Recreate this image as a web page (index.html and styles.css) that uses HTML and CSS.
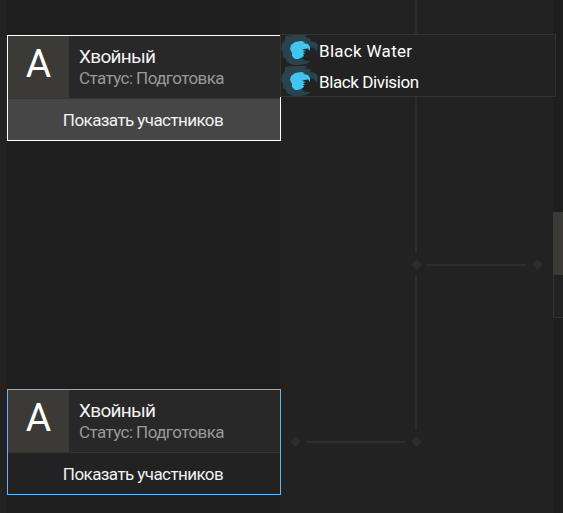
FILE: index.html
```
<!DOCTYPE html>
<html lang="ru">
<head>
    <meta charset="UTF-8">
    <meta name="viewport" content="width=device-width, initial-scale=1.0">
    <title>Турнирная сетка</title>
    <link rel="stylesheet" href="styles.css">
</head>
<body>
    <!-- Eagle logo shared by the teams -->
    <svg class="symbols" aria-hidden="true">
        <symbol id="eagle" viewBox="0 0 38 30">
            <path class="eagle-wing" d="M4 1 L12 0 L26 0 L24 2 L30 4 L29 6 L34 7 L37 10 L36 17 L33 13 L28 12 L20 16 L20 23 L25 26 L30 26 L25 29 L18 30 L12 30 L6 27 L5 24 L2 22 L2 18 L0 14 L1 9 L4 5 Z"/>
            <path class="eagle-head" d="M9 14 L10 10 L14 7 L20 6 L24 7 L22 8 L27 9 L29 12 L29 16 L27 13.5 L23 14 L21 15 L25 16 L22 17 L24 19 L22 19 L23 21 L20 23 L17 24 L14 24 L11 21 L11 18 Z"/>
        </symbol>
    </svg>

    <div class="bracket">
        <!-- First round matches -->
        <div class="round">
            <div class="match active">
                <div class="match-info">
                    <div class="match-letter">A</div>
                    <div class="match-text">
                        <div class="match-name">Хвойный</div>
                        <div class="match-status">Статус: Подготовка</div>
                    </div>
                </div>
                <div class="match-button">Показать участников</div>

                <!-- Popup with the match members -->
                <div class="members">
                    <div class="member">
                        <svg class="member-logo"><use href="#eagle"/></svg>
                        <span class="member-name water">Black Water</span>
                    </div>
                    <div class="member">
                        <svg class="member-logo"><use href="#eagle"/></svg>
                        <span class="member-name">Black Division</span>
                    </div>
                </div>
            </div>

            <div class="match">
                <div class="match-info">
                    <div class="match-letter">A</div>
                    <div class="match-text">
                        <div class="match-name">Хвойный</div>
                        <div class="match-status">Статус: Подготовка</div>
                    </div>
                </div>
                <div class="match-button">Показать участников</div>
            </div>
        </div>

        <!-- Lines between the rounds -->
        <svg class="connectors" width="273" height="513" viewBox="0 0 273 513">
            <path d="M135 0h2v253h-2z M135 275h2v155h-2z M147 264h99v2h-99z M26 441h99v2h-99z"/>
            <path d="M136.5 259l5.5 5.5-5.5 5.5-5.5-5.5z M257.5 259l5.5 5.5-5.5 5.5-5.5-5.5z M15.5 436l5.5 5.5-5.5 5.5-5.5-5.5z M136.5 436l5.5 5.5-5.5 5.5-5.5-5.5z"/>
        </svg>

        <!-- Next round, cut by the edge of the screen -->
        <div class="next-round">
            <div class="next-letter"></div>
            <div class="next-button"></div>
        </div>
    </div>
</body>
</html>
```

FILE: styles.css
```
body {
    margin: 0;
    background-color: #222;
    color: #f2f2f2;
    font-family: Roboto, "Liberation Sans", sans-serif;
}
.symbols {
    display: none;
}
.eagle-wing {
    fill: #29444f;
}
.eagle-head {
    fill: #43c5f1;
}
.bracket {
    display: grid;
    grid-template-columns: 273px 273px 10px;
    height: 513px;
    padding-left: 7px;
}
.round {
    display: flex;
    flex-direction: column;
    gap: 248px;
    background-color: #1e1e1e;
    padding-top: 35px;
}
.match {
    position: relative;
    box-sizing: border-box;
    width: 274px;
    height: 106px;
    border: 1px solid #66b5f5;
    background-color: #222;
}
.match.active {
    border-color: #fff;
}
.match-info {
    display: flex;
    height: 62px;
    background-color: #282828;
    border-bottom: 1px solid #333;
}
.match-letter {
    width: 61px;
    background-color: #3b3a37;
    color: #fff;
    font-size: 39px;
    line-height: 56px;
    text-align: center;
}
.match-text {
    padding: 10px 0 0 10px;
    white-space: nowrap;
}
.match-name {
    font-size: 19px;
    line-height: 22px;
    letter-spacing: -0.7px;
}
.match-status {
    color: #999;
    font-size: 17px;
    line-height: 20px;
    letter-spacing: -0.57px;
}
.match-button {
    height: 41px;
    padding-right: 2px;
    font-size: 17px;
    line-height: 43px;
    letter-spacing: -0.58px;
    text-align: center;
    white-space: nowrap;
}
.active .match-button {
    background-color: #464646;
}
.members {
    position: absolute;
    top: -2px;
    left: 272px;
    z-index: 2;
    width: 274px;
    height: 61px;
    border: 1px solid #333;
    background-color: #222;
}
.member {
    display: flex;
    height: 31px;
}
.member-logo {
    width: 38px;
    height: 30px;
}
.member-name {
    color: #fff;
    font-size: 17px;
    line-height: 33px;
    letter-spacing: -0.4px;
}
.member-name.water {
    letter-spacing: 0.3px;
}
.connectors {
    display: block;
    fill: #2d2d2d;
}
.next-round {
    background-color: #1e1e1e;
    padding-top: 212px;
}
.next-letter {
    height: 63px;
    background-color: #3b3a37;
}
.next-button {
    height: 42px;
    border: 1px solid #333;
    border-width: 0 0 1px 1px;
    background-color: #222;
}
```
